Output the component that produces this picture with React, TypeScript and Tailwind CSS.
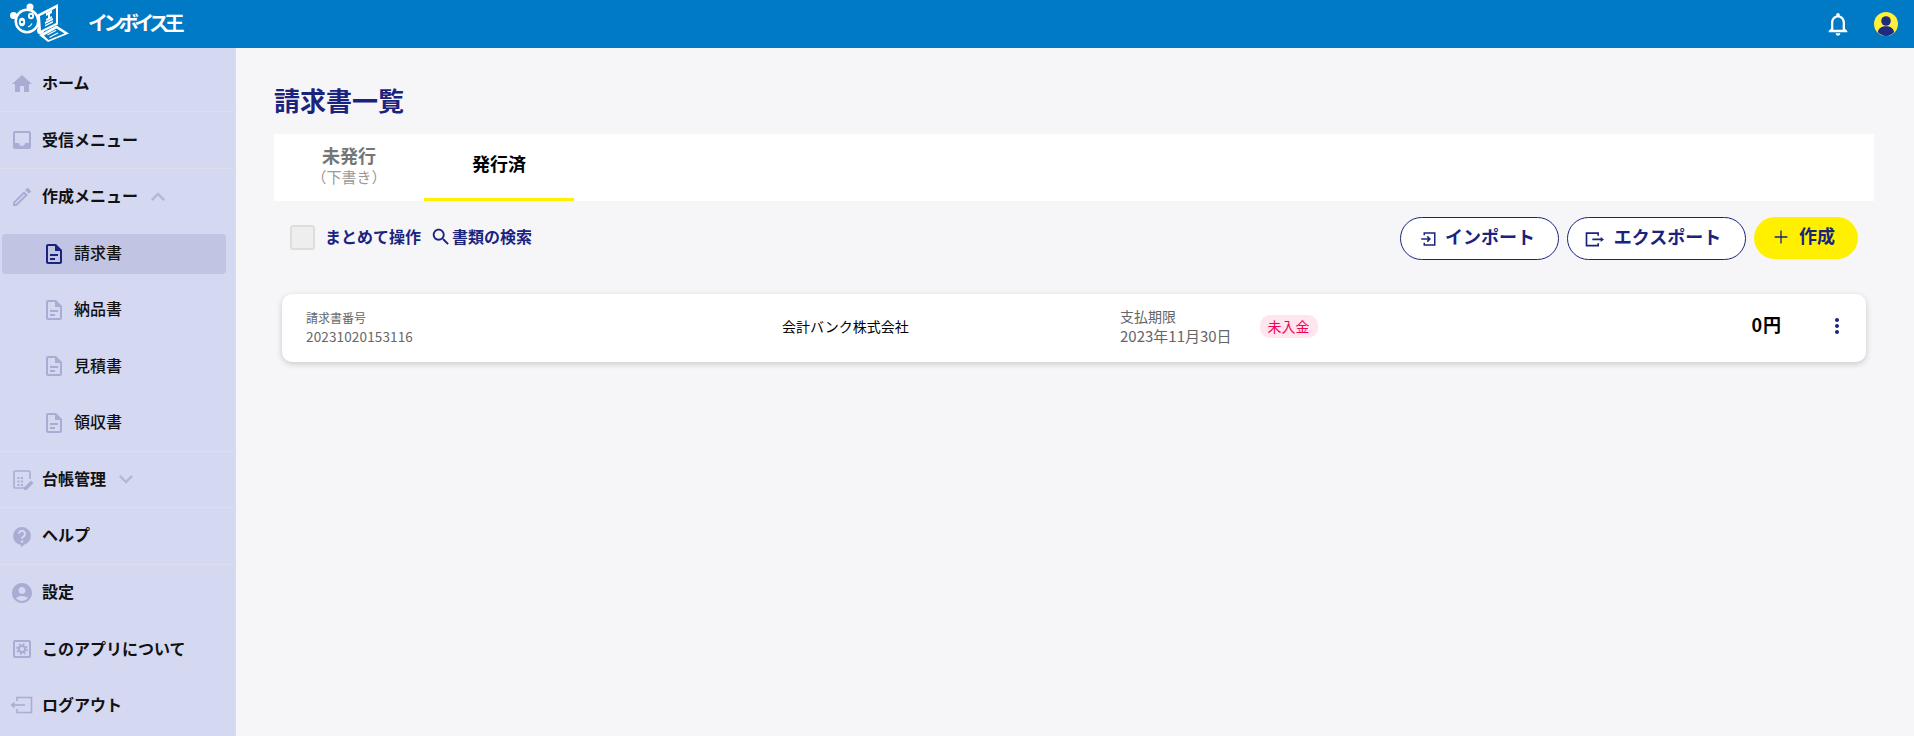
import type { ReactNode } from "react";

const FONT = "font-['Noto_Sans_CJK_JP','Noto_Sans',sans-serif]";

const Icon = ({ d, className }: { d: string; className?: string }) => (
  <svg viewBox="0 0 24 24" className={className} fill="currentColor">
    <path d={d} />
  </svg>
);

const HOME = "M10 20v-6h4v6h5v-8h3L12 3 2 12h3v8z";
const INBOX = "M19 3H5c-1.1 0-2 .9-2 2v14c0 1.1.9 2 2 2h14c1.1 0 2-.9 2-2V5c0-1.1-.9-2-2-2zm0 12h-4c0 1.66-1.35 3-3 3s-3-1.34-3-3H5V5h14v10z";
const EDIT = "M14.06 9.02l.92.92L5.92 19H5v-.92l9.06-9.06M17.66 3c-.25 0-.51.1-.7.29l-1.83 1.83 3.75 3.75 1.83-1.83c.39-.39.39-1.02 0-1.41l-2.34-2.34c-.2-.2-.45-.29-.71-.29zm-3.6 3.19L3 17.25V21h3.75L17.81 9.94l-3.75-3.75z";
const DOC = "M8 12h8v2H8zm0 4h5v2H8zm6-14H6c-1.1 0-2 .9-2 2v16c0 1.1.89 2 1.99 2H18c1.1 0 2-.9 2-2V8l-6-6zm4 18H6V4h7v5h5v11z";
const UP = "M12 8l-6 6 1.41 1.41L12 10.83l4.59 4.58L18 14z";
const DOWN = "M16.59 8.59L12 13.17 7.41 8.59 6 10l6 6 6-6z";
const ACCOUNT = "M12 2C6.48 2 2 6.48 2 12s4.48 10 10 10 10-4.48 10-10S17.52 2 12 2zm0 4c1.93 0 3.5 1.57 3.5 3.5S13.93 13 12 13s-3.5-1.57-3.5-3.5S10.07 6 12 6zm0 14c-2.03 0-4.43-.82-6.14-2.88C7.55 15.8 9.68 15 12 15s4.45.8 6.14 2.12C16.43 19.18 14.03 20 12 20z";
const SEARCH = "M15.5 14h-.79l-.28-.27C15.41 12.59 16 11.11 16 9.5 16 5.91 13.09 3 9.5 3S3 5.91 3 9.5 5.91 16 9.5 16c1.61 0 3.09-.59 4.23-1.57l.27.28v.79l5 4.99L20.49 19l-4.99-5zm-6 0C7.01 14 5 11.99 5 9.5S7.01 5 9.5 5 14 7.01 14 9.5 11.99 14 9.5 14z";
const BELL = "M12 22c1.1 0 2-.9 2-2h-4c0 1.1.9 2 2 2zm6-6v-5c0-3.07-1.63-5.64-4.5-6.32V4c0-.83-.67-1.5-1.5-1.5s-1.5.67-1.5 1.5v.68C7.64 5.36 6 7.92 6 11v5l-2 2v1h16v-1l-2-2zm-2 1H8v-6c0-2.48 1.51-4.5 4-4.5s4 2.02 4 4.5v6z";
const MORE = "M12 8c1.1 0 2-.9 2-2s-.9-2-2-2-2 .9-2 2 .9 2 2 2zm0 2c-1.1 0-2 .9-2 2s.9 2 2 2 2-.9 2-2-.9-2-2-2zm0 6c-1.1 0-2 .9-2 2s.9 2 2 2 2-.9 2-2-.9-2-2-2z";

const HelpIcon = () => (
  <svg viewBox="0 0 24 24" className="w-6 h-6">
    <path fill="currentColor" d="M12 3a9 9 0 0 0-1 17.94V23.5l3.2-2.8A9 9 0 0 0 12 3z" />
    <path fill="none" stroke="#d5d8f1" strokeWidth="2" d="M9 9.8a3 3 0 1 1 4.6 2.5c-1 .7-1.6 1.2-1.6 2.4" />
    <circle cx="12" cy="17.6" r="1.2" fill="#d5d8f1" />
  </svg>
);

const AboutIcon = () => (
  <svg viewBox="0 0 24 24" className="w-6 h-6" fill="none">
    <rect x="4" y="4" width="16" height="16" rx="1" stroke="currentColor" strokeWidth="2" />
    <circle cx="12" cy="12" r="3.2" stroke="currentColor" strokeWidth="2.2" />
    <circle cx="12" cy="12" r="5" stroke="currentColor" strokeWidth="1.6" strokeDasharray="2 1.93" />
  </svg>
);

const LogoutIcon = () => (
  <svg viewBox="0 0 24 24" className="w-6 h-6" fill="none" stroke="currentColor">
    <path strokeWidth="1.6" d="M7 8V4.500h14.500v15H7V16" />
    <path strokeWidth="1.6" d="M15 12H2" />
    <path fill="currentColor" stroke="none" d="M0.500 12l4-3.500v7z" />
  </svg>
);

const LedgerIcon = () => (
  <svg viewBox="0 0 24 24" className="w-6 h-6" fill="none">
    <path stroke="currentColor" strokeWidth="1.6" d="M15 21H5a1 1 0 0 1-1-1V5a1 1 0 0 1 1-1h14a1 1 0 0 1 1 1v7" />
    <path fill="currentColor" d="M7.500 10h2v2h-2zm3.500 0h2v2h-2zm-3.500 3.500h2v2h-2zm3.500 0h2v2h-2zm-3.500 3.500h2v2h-2zm3.500 0h2v2h-2z" />
    <path fill="currentColor" d="M14 20.500v2.500h2.500l7-7-2.500-2.500z" />
  </svg>
);

const Logo = () => (
  <svg viewBox="0 0 66 46" className="w-[66px] h-[46px] shrink-0">
    <g fill="#fff">
      <circle cx="5.500" cy="14.500" r="3.500" />
      <circle cx="22" cy="6" r="3.500" />
      <circle cx="32.500" cy="29.500" r="3.500" />
      <circle cx="19" cy="20" r="12.500" />
      <path d="M29.500 13.500L50 3v20.500L30.500 33z" />
      <path d="M31 34l17.500-9.500L61 32.500 40 41z" />
    </g>
    <g fill="#007ac4">
      <circle cx="19" cy="20" r="10" />
      <path d="M32 15l16-8v15L33 29.500z" />
      <path d="M36 34.500l12.500-7 8 5-16 6.500z" />
    </g>
    <g fill="#fff">
      <ellipse cx="14" cy="21" rx="3.200" ry="4.200" />
      <ellipse cx="23" cy="15" rx="3" ry="3.200" />
      <path d="M38 12l6-3v3l-2 1v3l2-1v2l-6 3v-2l2-1v-3l-2 1zM37 21l8-4v2l-8 4zm0 3l8-4v1.500l-8 4z" />
      <path d="M39 33.500l8.500-4.500 1 .8-8.500 4.500zM41 36l8.500-4.500 1 .8-8.500 4.500z" />
    </g>
    <g fill="#007ac4">
      <circle cx="14" cy="21" r="1.300" />
      <circle cx="23" cy="15" r="1.200" />
    </g>
    <path d="M20 26q3-1 4-3.500" stroke="#fff" strokeWidth="1.200" fill="none" />
  </svg>
);

const Avatar = () => (
  <svg viewBox="0 0 24 24" className="w-6 h-6">
    <circle cx="12" cy="12" r="12" fill="#fff03a" />
    <circle cx="12" cy="9" r="4.800" fill="#1f2a80" />
    <path d="M3.800 20c.8-4 4-5.800 8.200-5.800s7.400 1.800 8.200 5.800A12 12 0 0 1 12 24a12 12 0 0 1-8.200-4z" fill="#1f2a80" />
  </svg>
);

const NavItem = ({
  icon,
  label,
  after,
  border,
}: {
  icon: ReactNode;
  label: string;
  after?: ReactNode;
  border?: boolean;
}) => (
  <div className={`h-[56.4px] flex items-center pl-[10px] text-[#a9add3] ${border ? "border-b border-[#dcdeee]" : ""}`}>
    <span className="w-6 h-6 shrink-0">{icon}</span>
    <span className="ml-2 pb-[3px] text-base font-bold text-[#111] whitespace-nowrap">{label}</span>
    {after}
  </div>
);

const SubItem = ({ label, active }: { label: string; active?: boolean }) => (
  <div className={`h-[56.4px] flex items-center px-[2px] ${active ? "pt-[1px]" : ""}`}>
    <div className={`h-10 w-[224px] rounded flex items-center pl-[40px] ${active ? "bg-[#c1c5e3] text-[#1a237e]" : "text-[#a9add3]"}`}>
      <Icon d={DOC} className="w-6 h-6 shrink-0" />
      <span className="ml-2 pb-[3px] text-base font-medium text-[#111]">{label}</span>
    </div>
  </div>
);

const Chevron = ({ d }: { d: string }) => <Icon d={d} className="w-7 h-7 ml-[6px] text-[#b3b7d9]" />;

const App = () => {
  return (
    <div className={`w-[1914px] h-[736px] flex flex-col overflow-hidden bg-[#f6f6f9] ${FONT}`}>
      {/* Header */}
      <header className="h-12 shrink-0 bg-[#007ac4] flex items-center justify-between pl-2 pr-4">
        <div className="flex items-center">
          <Logo />
          <span className="ml-[14px] pb-[3px] text-xl font-bold text-white tracking-[-4.6px] whitespace-nowrap">インボイス王</span>
        </div>
        <div className="flex items-center gap-[22px]">
          <Icon d={BELL} className="w-7 h-7 text-white" />
          <Avatar />
        </div>
      </header>

      <div className="flex flex-1 min-h-0">
        {/* Sidebar */}
        <aside className="w-[236px] shrink-0 bg-[#d5d8f1] border-r border-[#dcdce0] pt-2 overflow-hidden">
          <NavItem icon={<Icon d={HOME} className="w-6 h-6" />} label="ホーム" border />
          <NavItem icon={<Icon d={INBOX} className="w-6 h-6" />} label="受信メニュー" border />
          <NavItem icon={<Icon d={EDIT} className="w-6 h-6" />} label="作成メニュー" after={<Chevron d={UP} />} />
          <SubItem label="請求書" active />
          <SubItem label="納品書" />
          <SubItem label="見積書" />
          <div className="border-b border-[#dcdeee]">
            <SubItem label="領収書" />
          </div>
          <NavItem icon={<LedgerIcon />} label="台帳管理" after={<Chevron d={DOWN} />} border />
          <NavItem icon={<HelpIcon />} label="ヘルプ" border />
          <NavItem icon={<Icon d={ACCOUNT} className="w-6 h-6" />} label="設定" />
          <NavItem icon={<AboutIcon />} label="このアプリについて" />
          <NavItem icon={<LogoutIcon />} label="ログアウト" />
        </aside>

        {/* Main */}
        <main className="flex-1 min-w-0 pl-[38px] pr-[40px]">
          <h1 className="mt-[33px] h-[38px] leading-[38px] text-[26px] font-bold text-[#1a237e]">請求書一覧</h1>
          <div className="mt-[15px] h-[67px] bg-white flex">
            <div className="w-[150px] flex flex-col items-center justify-center pb-[3px]">
              <span className="text-lg leading-[21px] font-bold text-[#757575]">未発行</span>
              <span className="text-[15px] leading-[21px] text-[#999]">（下書き）</span>
            </div>
            <div className="w-[150px] flex items-center justify-center border-b-[3px] border-[#fff000] pb-[7px]">
              <span className="text-lg font-bold text-black">発行済</span>
            </div>
          </div>

          {/* Toolbar */}
          <div className="mt-4 h-[44px] flex items-start justify-between pl-4 pr-4">
            <div className="flex items-center h-10">
              <span className="w-[25px] h-[25px] rounded-[3px] bg-[#eeeeee] border-2 border-[#dddddd]" />
              <span className="ml-[10px] pb-[3px] text-base font-bold text-[#1a237e]">まとめて操作</span>
              <span className="ml-[9px] flex items-center text-[#1a237e]">
                <Icon d={SEARCH} className="w-[22px] h-[22px]" />
                <span className="pb-[3px] text-base font-bold">書類の検索</span>
              </span>
            </div>
            <div className="flex items-start gap-2">
              <button className="w-[159px] h-[43px] pr-[5px] pb-[6px] rounded-full border border-[#1a237e] bg-white flex items-center justify-center text-[#1a237e] text-lg font-bold">
                <svg viewBox="0 0 24 24" className="w-[18px] h-[18px] mr-[8px] mt-[6px]" fill="none" stroke="currentColor" strokeWidth="2">
                  <path d="M7 7V4h14v16H7v-3M3 12h11M11 8.500l3.500 3.500-3.500 3.500" />
                </svg>
                インポート
              </button>
              <button className="w-[179px] h-[43px] pr-[8px] pb-[6px] rounded-full border border-[#1a237e] bg-white flex items-center justify-center text-[#1a237e] text-lg font-bold">
                <svg viewBox="0 0 24 24" className="w-[20px] h-[20px] mr-[10px] mt-[6px]" fill="none" stroke="currentColor" strokeWidth="2">
                  <path d="M17 8V5H3v15h14v-3M10 12.500h11" />
                  <path fill="currentColor" stroke="none" d="M20 9.500l4 3-4 3z" />
                </svg>
                エクスポート
              </button>
              <button className="w-[104px] h-[42px] pr-[3px] pb-[7px] rounded-full bg-[#fff000] flex items-center justify-center text-[#1a237e] text-lg font-bold">
                <svg viewBox="0 0 24 24" className="w-[14px] h-[14px] mr-[11px] mt-[5px]" fill="none" stroke="currentColor" strokeWidth="2.200">
                  <path d="M12 1v22M1 12h22" />
                </svg>
                作成
              </button>
            </div>
          </div>

          {/* Invoice card */}
          <div className="mt-[33px] ml-2 mr-2 h-[68px] bg-white rounded-[10px] shadow-[0_2px_6px_rgba(0,0,0,0.18)] flex items-center">
            <div className="w-[500px] pl-[24px] text-[#666] pb-[4px]">
              <div className="text-xs leading-[19px]">請求書番号</div>
              <div className="text-[13.500px] tracking-[0.15px] leading-[18px]">20231020153116</div>
            </div>
            <div className="w-[338px] pb-[5px] text-sm text-black">会計バンク株式会社</div>
            <div className="text-[#666] pb-[4px]">
              <div className="text-sm leading-[20px]">支払期限</div>
              <div className="text-[15px] leading-[20px]">2023年11月30日</div>
            </div>
            <span className="ml-[28px] mb-[3px] h-[23px] px-2 rounded-[10px] bg-[#ffe6ee] text-[#f50057] text-sm leading-[23px]">未入金</span>
            <span className="ml-auto pb-[8px] text-lg font-bold text-black tracking-[1px]">0円</span>
            <Icon d={MORE} className="w-6 h-6 ml-[43px] mr-[17px] mb-[5px] text-[#1a237e]" />
          </div>
        </main>
      </div>
    </div>
  );
};

export default App;
